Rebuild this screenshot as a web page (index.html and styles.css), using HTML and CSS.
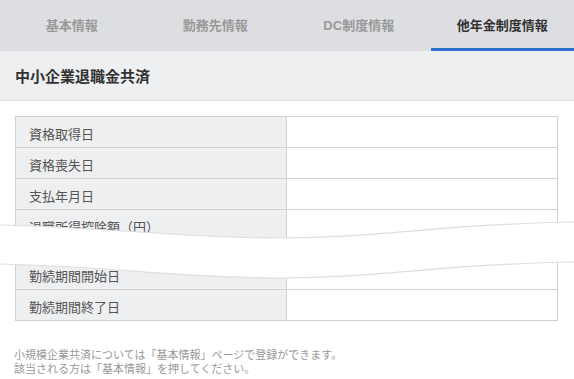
FILE: index.html
```html
<!DOCTYPE html>
<html lang="ja">
<head>
    <meta charset="UTF-8">
    <meta name="viewport" content="width=device-width, initial-scale=1.0">
    <title>他年金制度情報</title>
    <link rel="stylesheet" href="styles.css">
</head>
<body>
    <!-- タブ -->
    <nav class="tabs">
        <div class="tab">基本情報</div>
        <div class="tab">勤務先情報</div>
        <div class="tab">DC制度情報</div>
        <div class="tab active">他年金制度情報</div>
    </nav>

    <div class="section-title">中小企業退職金共済</div>

    <div class="content">
        <table class="info-table">
            <tr><th>資格取得日</th><td></td></tr>
            <tr><th>資格喪失日</th><td></td></tr>
            <tr><th>支払年月日</th><td></td></tr>
            <tr><th>退職所得控除額（円）</th><td></td></tr>
            <tr class="cut"><th></th><td></td></tr>
            <tr><th>勤続期間開始日</th><td></td></tr>
            <tr><th>勤続期間終了日</th><td></td></tr>
        </table>

        <p class="note">
            小規模企業共済については「基本情報」ページで登録ができます。<br>
            該当される方は「基本情報」を押してください。
        </p>
    </div>

    <!-- 省略部分（切り取り線） -->
    <svg class="tear" width="574" height="70" viewBox="0 218 574 70">
        <path d="M0,225 C120,228 180,238 280,238 C380,238 440,224 574,222 L574,262 C440,264 380,278 280,278 C180,278 120,267 0,264 Z" fill="#fff"/>
        <path d="M0,225 C120,228 180,238 280,238 C380,238 440,224 574,222" fill="none" stroke="#dedede" stroke-width="1.2"/>
        <path d="M0,264 C120,267 180,278 280,278 C380,278 440,264 574,262" fill="none" stroke="#dedede" stroke-width="1.2"/>
    </svg>
</body>
</html>
```

FILE: styles.css
```css
body {
    font-family: 'Liberation Sans', 'Noto Sans CJK JP', sans-serif;
    background-color: #fff;
    margin: 0;
    padding: 0;
    color: #333;
    position: relative;
}

.tabs {
    display: flex;
    background-color: #dddee1;
    height: 51px;
}

.tab {
    flex: 1;
    box-sizing: border-box;
    height: 51px;
    padding-top: 4px;
    line-height: 44px;
    text-align: center;
    font-size: 13px;
    font-weight: bold;
    color: #999;
    border-bottom: 3px solid transparent;
}

.tab.active {
    color: #333;
    border-bottom-color: #2c6fd1;
}

.section-title {
    background-color: #eeeff1;
    border-bottom: 1px solid #dcdcdc;
    height: 47px;
    padding: 2px 15px 0;
    line-height: 47px;
    font-size: 15px;
    font-weight: bold;
    color: #333;
}

.content {
    padding: 15px 16px 0 15px;
}

.info-table {
    width: 100%;
    border-collapse: collapse;
}

.info-table th,
.info-table td {
    border: 1px solid #d2d2d2;
    height: 30px;
    padding: 0;
}

.info-table th {
    width: 271px;
    background-color: #eeeff1;
    text-align: left;
    font-weight: normal;
    font-size: 13px;
    color: #555;
    padding: 2px 0 0 13px;
    box-sizing: border-box;
}

.info-table td {
    background-color: #fff;
}

.info-table tr.cut th,
.info-table tr.cut td {
    height: 17px;
    padding: 0;
}

.note {
    margin: 27px 0 0 -1px;
    font-size: 11px;
    line-height: 14px;
    color: #999;
}

/* 省略を示す波線 */
.tear {
    position: absolute;
    left: 0;
    top: 218px;
}
```
